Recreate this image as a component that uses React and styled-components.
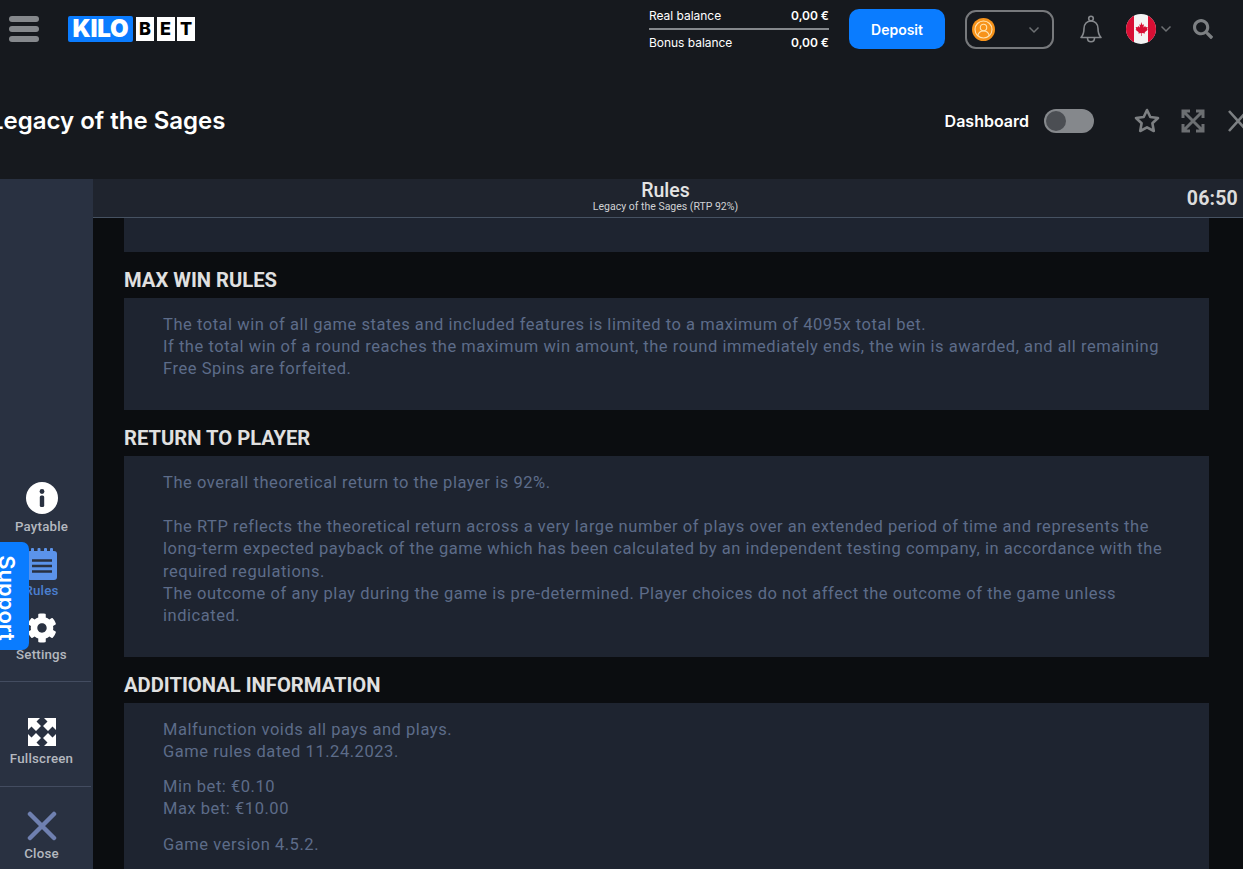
import React from "react";
import styled, { createGlobalStyle } from "styled-components";
import { FaCog, FaSearch } from "react-icons/fa";

const Global = createGlobalStyle`
  html, body { margin: 0; padding: 0; background: #16191e; }
  * { box-sizing: border-box; }
`;
const Page = styled.div`
  position: relative; width: 1243px; height: 869px; overflow: hidden;
  background: #16191e; font-family: Inter, "Liberation Sans", sans-serif; color: #fff;
`;
const TopBar = styled.header`
  height: 58px; display: flex; align-items: center; padding: 0 0 0 9px;
`;
const Burger = styled.div`
  width: 30px; height: 26px; display: flex; flex-direction: column; justify-content: space-between;
  & > i { display: block; height: 6px; border-radius: 3px; background: #85888c; }
`;
const Logo = styled.div`
  display: flex; align-items: center; margin-left: 29px; height: 26px;
`;
const LogoKilo = styled.div`
  width: 65px; height: 26px; background: #0a7cff; border-radius: 2px; color: #fff;
  font: 900 24px/26px Inter, sans-serif; text-align: center; letter-spacing: -0.2px;
`;
const LogoTile = styled.div`
  width: 18px; height: 24px; margin-left: ${p => p.$first ? 3 : 2.5}px; background: #fff; color: #000;
  font: 800 18px/24px Inter, sans-serif; text-align: center;
`;
const Balance = styled.div`
  width: 180px; margin-left: auto; display: flex; flex-direction: column;
`;
const BalanceRow = styled.div`
  display: flex; justify-content: space-between; align-items: center; height: 26px; padding-bottom: 1px;
  font-size: 12px; font-weight: 400; color: #fff; letter-spacing: -0.03px;
  & b { font-weight: 600; font-size: 12px; }
  &:first-child { border-bottom: 2px solid #85888c; height: 28px; padding-bottom: 0; }
`;
const DepositButton = styled.button`
  width: 96px; height: 40px; margin-left: 20px; border: 0; border-radius: 10px;
  background: #0a7cff; color: #fff; font: 600 14px Inter, sans-serif;
`;
const Account = styled.div`
  width: 89px; height: 39px; margin-left: 20px; margin-top: 1px; border: 2px solid #77797c; border-radius: 11px;
  display: flex; align-items: center; justify-content: space-between; padding: 0 12px 0 5px;
`;
const Avatar = styled.div`
  width: 23px; height: 23px; border-radius: 50%; background: #f7931a; display: flex; align-items: center; justify-content: center;
`;
const BellSlot = styled.div` margin-left: 24px; width: 26px; height: 30px; display: flex; `;
const FlagSlot = styled.div` margin-left: 22px; display: flex; align-items: center; gap: 4px; `;
const SearchSlot = styled.div` margin-left: 21px; margin-right: 30px; color: #7d8083; display: flex; `;
const TitleBar = styled.div`
  height: 121px; display: flex; align-items: center; padding-top: 5px;
`;
const GameTitle = styled.h1`
  margin: 0 0 0 -10px; font: 600 24px/30px Inter, sans-serif; color: #fff; white-space: nowrap; flex: none;
`;
const DashLabel = styled.span` margin-left: auto; font: 600 16px Inter, sans-serif; `;
const Toggle = styled.div`
  width: 50px; height: 24px; margin-left: 15px; border-radius: 12px; background: #85888c; padding: 2px;
  & > i { display: block; width: 20px; height: 20px; border-radius: 50%; background: #4b4e53; }
`;
const TitleIcon = styled.div`
  margin-left: ${p => p.$ml}px; margin-right: ${p => p.$mr || 0}px; display: flex; flex: none; width: ${p => p.$w}px;
`;
const Game = styled.div`
  height: 690px; display: flex; overflow: hidden; font-family: Roboto, sans-serif;
`;
const Sidebar = styled.nav`
  width: 93px; flex: none; background: #293141; display: flex; flex-direction: column; justify-content: flex-end;
`;
const NavItem = styled.div`
  display: flex; flex-direction: column; align-items: center; width: 83px; height: ${p => p.$h}px;
  font: 500 13.3px/16px Roboto, sans-serif; letter-spacing: 0.2px; color: ${p => p.$active ? "#4b7fd0" : "#b4b8bf"};
`;
const NavIcon = styled.div`
  height: ${p => p.$h}px; padding: ${p => p.$pt || 0}px 0 ${p => p.$pb || 0}px; display: flex; align-items: center; justify-content: center;
`;
const Divider = styled.hr`
  width: 91px; height: 1px; margin: 0; border: 0; background: #434c60; align-self: flex-start;
`;
const Main = styled.main`
  flex: 1; min-width: 0; display: flex; flex-direction: column; background: #0b0d10;
`;
const RulesBar = styled.div`
  height: 39px; flex: none; background: #1f242e; border-bottom: 1px solid #465262;
  display: grid; grid-template-columns: 1fr auto 1fr; align-items: start; padding-right: 5px;
`;
const RulesTitle = styled.div`
  grid-column: 2; text-align: center; color: #e4e4e4; padding-top: 1px;
  & > h2 { margin: 0; font: 500 19.5px/21px Roboto, sans-serif; }
  & > p { margin: 0; font: 400 10.5px/11px Roboto, sans-serif; color: #d0d2d5; }
`;
const Clock = styled.div`
  grid-column: 3; justify-self: end; align-self: center; font: 700 19.5px Roboto, sans-serif; color: #dcdcdc; letter-spacing: 0.2px;
`;
const Scroll = styled.div`
  flex: 1; overflow: hidden; padding: 0 34px 0 31px;
`;
const Heading = styled.h3`
  margin: 0; height: 46px; padding-top: 15px; font: 700 20.2px/26px Roboto, sans-serif; color: #e0e0e0; text-transform: uppercase;
`;
const Panel = styled.section`
  background: #1e2430; padding: ${p => p.$empty ? "34px 0 0" : "15.6px 40px 30px 39px"};
  font: 400 16.5px/22.2px Roboto, sans-serif; letter-spacing: 0.54px; color: #5d6c89;
  & p { margin: 0 0 13px; }
`;
const SupportTab = styled.div`
  position: absolute; left: 0; top: 542px; width: 29px; height: 108px; background: #0a7cff;
  border-radius: 0 7px 7px 0; overflow: hidden; display: flex; align-items: center; justify-content: center;
  & > span { display: block; transform: rotate(90deg); color: #fff; font: 600 22px Inter, sans-serif; margin: 4px 0 0 -16px; }
`;

const Chevron = ({ c = "#6d7073" }) => (
  <svg width="12" height="8" viewBox="0 0 12 8" fill="none" stroke={c} strokeWidth="1.5"><path d="M1.5 1.5 6 6l4.5-4.5" /></svg>
);
const Expand = ({ size, color, sw }) => (
  <svg width={size} height={size} viewBox="0 0 24 24" fill="none" stroke={color} strokeWidth={sw}>
    <path d="M9 2H2v7M15 2h7v7M9 22H2v-7M15 22h7v-7M3 3l18 18M21 3 3 21" />
  </svg>
);

export default function App() {
  return (
    <Page>
      <Global />
      <TopBar>
        <Burger><i /><i /><i /></Burger>
        <Logo>
          <LogoKilo>KILO</LogoKilo>
          <LogoTile $first>B</LogoTile><LogoTile>E</LogoTile><LogoTile>T</LogoTile>
        </Logo>
        <Balance>
          <BalanceRow><span>Real balance</span><b>0,00 €</b></BalanceRow>
          <BalanceRow><span>Bonus balance</span><b>0,00 €</b></BalanceRow>
        </Balance>
        <DepositButton>Deposit</DepositButton>
        <Account>
          <Avatar>
            <svg width="19" height="19" viewBox="0 0 19 19" fill="none" stroke="#ffe2b0" strokeWidth="1.1">
              <circle cx="9.5" cy="9.5" r="8.5" /><circle cx="9.5" cy="7.5" r="3.2" /><path d="M3.8 16c.5-3.4 2.600-5 5.700-5s5.200 1.600 5.700 5" />
            </svg>
          </Avatar>
          <Chevron />
        </Account>
        <BellSlot>
          <svg width="26" height="30" viewBox="0 0 26 30" fill="none" stroke="#85888c" strokeWidth="1.6" strokeLinejoin="round">
            <path d="M3 23.500c2-2 3-3.500 3-9 0-4.500 3-7.500 7-7.500s7 3 7 7.500c0 5.500 1 7 3 9z" />
            <circle cx="13" cy="4.500" r="2.300" /><path d="M9.500 24c0 5 7 5 7 0" />
          </svg>
        </BellSlot>
        <FlagSlot>
          <svg width="30" height="30" viewBox="0 0 30 30">
            <defs><clipPath id="fc"><circle cx="15" cy="15" r="15" /></clipPath></defs>
            <g clipPath="url(#fc)">
              <rect width="30" height="30" fill="#f4f4f4" /><rect width="8" height="30" fill="#d80f34" /><rect x="22" width="8" height="30" fill="#d80f34" />
              <path d="M15 8l1.500 3 1.500-.8-.6 3.300 1.800-1.500.5 1.300 2-.3-.6 2.200.8.5-3.200 2.500.3 1.300-3-.4V22h-.6v-2.900l-3 .4.300-1.300-3.200-2.500.8-.5-.6-2.200 2 .3.500-1.300 1.800 1.500-.6-3.300 1.500.8z" fill="#d80f34" />
            </g>
          </svg>
          <Chevron />
        </FlagSlot>
        <SearchSlot><FaSearch size={20} /></SearchSlot>
      </TopBar>
      <TitleBar>
        <GameTitle>Legacy of the Sages</GameTitle>
        <DashLabel>Dashboard</DashLabel>
        <Toggle><i /></Toggle>
        <TitleIcon $ml={39} $w={28}>
          <svg width="28" height="28" viewBox="0 0 28 28" fill="none" stroke="#7d8083" strokeWidth="2.600" strokeLinejoin="round">
            <path d="M14 3l3.300 7 7.700 1-5.600 5.300 1.400 7.700L14 20.300 7.200 24l1.400-7.700L3 11l7.700-1z" />
          </svg>
        </TitleIcon>
        <TitleIcon $ml={20} $w={24}><Expand size={24} color="#6c6f72" sw="3" /></TitleIcon>
        <TitleIcon $ml={23} $w={20} $mr={-5}>
          <svg width="20" height="22" viewBox="0 0 20 22" fill="none" stroke="#7d8083" strokeWidth="2.600"><path d="M1 1l18 20M19 1 1 21" /></svg>
        </TitleIcon>
      </TitleBar>
      <Game>
        <Sidebar>
          <NavItem $h={64}>
            <NavIcon $h={39} $pb={3}>
              <svg width="32" height="32" viewBox="0 0 32 32"><circle cx="16" cy="16" r="16" fill="#fff" /><circle cx="16" cy="9.500" r="2.400" fill="#293141" /><rect x="13.800" y="13.500" width="4.400" height="11.500" rx="1.500" fill="#293141" /></svg>
            </NavIcon>
            Paytable
          </NavItem>
          <NavItem $h={64} $active>
            <NavIcon $h={39} $pt={1}>
              <svg width="30" height="32" viewBox="0 0 30 32">
                <rect x="0" y="3" width="30" height="29" rx="3" fill="#5b93ea" />
                <rect x="4" y="0" width="3" height="5" rx="1" fill="#5b93ea" /><rect x="10.500" y="0" width="3" height="5" rx="1" fill="#5b93ea" /><rect x="17" y="0" width="3" height="5" rx="1" fill="#5b93ea" /><rect x="23" y="0" width="3" height="5" rx="1" fill="#5b93ea" />
                <path d="M5 12.500h20M5 18h20M5 23.500h20" stroke="#293141" strokeWidth="2.400" />
              </svg>
            </NavIcon>
            Rules
          </NavItem>
          <NavItem $h={73}>
            <NavIcon $h={39}><FaCog size={30} color="#fff" /></NavIcon>
            Settings
          </NavItem>
          <Divider />
          <NavItem $h={104}>
            <NavIcon $h={69} $pt={31}>
              <svg width="28" height="28" viewBox="0 0 28 28" fill="#fff">
                <path d="M0 0h12L8.500 3.500 13 8 8 13 3.500 8.500 0 12zM28 0v12l-3.500-3.500L20 13l-5-5 4.500-4.500L16 0zM0 28V16l3.500 3.500L8 15l5 5-4.500 4.500L12 28zM28 28H16l3.500-3.500L15 20l5-5 4.500 4.500L28 16z" />
              </svg>
            </NavIcon>
            Fullscreen
          </NavItem>
          <Divider />
          <NavItem $h={82}>
            <NavIcon $h={59} $pt={19}>
              <svg width="30" height="30" viewBox="0 0 30 30" fill="none" stroke="#6f80b0" strokeWidth="4.500" strokeLinecap="round"><path d="M3 3l24 24M27 3 3 27" /></svg>
            </NavIcon>
            Close
          </NavItem>
        </Sidebar>
        <Main>
          <RulesBar>
            <RulesTitle><h2>Rules</h2><p>Legacy of the Sages (RTP 92%)</p></RulesTitle>
            <Clock>06:50</Clock>
          </RulesBar>
          <Scroll>
            <Panel $empty />
            <Heading>Max win rules</Heading>
            <Panel>
              The total win of all game states and included features is limited to a maximum of 4095x total bet.<br />
              If the total win of a round reaches the maximum win amount, the round immediately ends, the win is awarded, and all remaining Free Spins are forfeited.
            </Panel>
            <Heading>Return to player</Heading>
            <Panel>
              The overall theoretical return to the player is 92%.<br /><br />
              The RTP reflects the theoretical return across a very large number of plays over an extended period of time and represents the long-term expected payback of the game which has been calculated by an independent testing company, in accordance with the required regulations.<br />
              The outcome of any play during the game is pre-determined. Player choices do not affect the outcome of the game unless indicated.
            </Panel>
            <Heading>Additional information</Heading>
            <Panel>
              <p>Malfunction voids all pays and plays.<br />Game rules dated 11.24.2023.</p>
              <p>Min bet: €0.10<br />Max bet: €10.00</p>
              <p>Game version 4.5.2.</p>
            </Panel>
          </Scroll>
        </Main>
      </Game>
      <SupportTab><span>Support</span></SupportTab>
    </Page>
  );
}
